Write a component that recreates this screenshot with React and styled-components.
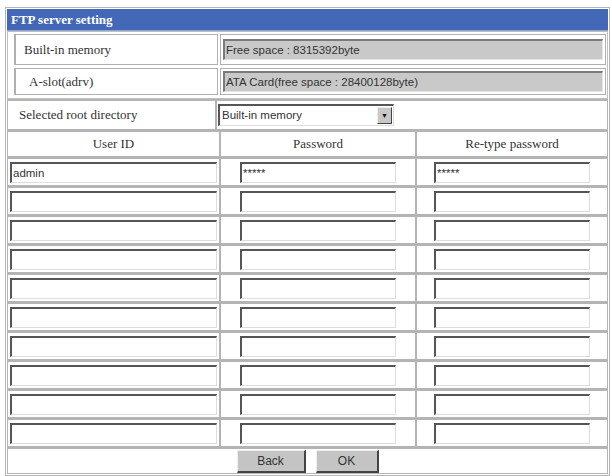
import React from "react";
import styled, { createGlobalStyle } from "styled-components";

const Global = createGlobalStyle`
  html, body { margin: 0; padding: 0; background: #fff; }
  body { font-family: "Liberation Serif", "Times New Roman", serif; color: #222; }
`;

const serif = `"Liberation Serif", "Times New Roman", serif`;
const sans = `"Liberation Sans", Arial, sans-serif`;

const Frame = styled.div`
  margin: 7px 0 0 5px;
  width: 601px;
  border: 1px solid #b4b4b4;
  padding: 1px;
  background: #fff;
`;

const Header = styled.div`
  height: 21px;
  line-height: 21px;
  background: #4368b8;
  color: #fff;
  font-family: ${serif};
  font-weight: bold;
  font-size: 13px;
  padding-left: 4px;
  border-bottom: 1px solid #8ea6d6;
`;

const InfoBlock = styled.div`
  border: 1px solid #c0c0c0;
  padding: 2px 1px 3px 6px;
  display: flex;
  flex-direction: column;
  gap: 3px;
`;

const InfoRow = styled.div`
  display: grid;
  grid-template-columns: 204px 1fr;
  gap: 2px;
  height: ${(p) => p.$h}px;
`;

const LabelCell = styled.div`
  border: 1px solid #b0b0b0;
  border-left-width: 2px;
  display: flex;
  align-items: center;
  padding-left: ${(p) => p.$pad || 0}px;
  font-family: ${serif};
  font-size: 13px;
  color: #333;
`;

const ValueCell = styled.div`
  border: 1px solid #b0b0b0;
  display: flex;
  align-items: center;
  padding: 0 2px;
`;

const GrayBox = styled.div`
  flex: 1;
  height: 21px;
  box-sizing: border-box;
  background: #c9c9c9;
  border-top: 2px solid #7a7a7a;
  border-left: 2px solid #7a7a7a;
  border-right: 1px solid #e6e6e6;
  border-bottom: 1px solid #e6e6e6;
  font-family: ${sans};
  font-size: 11.5px;
  color: #333;
  line-height: 18px;
  padding-left: 1px;
  white-space: nowrap;
`;

const GridRow = styled.div`
  display: grid;
  grid-template-columns: ${(p) => p.$cols};
  height: ${(p) => p.$h}px;
`;

const SelectBox = styled.div`
  width: 176px;
  height: 22px;
  box-sizing: border-box;
  display: flex;
  border-top: 2px solid #555;
  border-left: 2px solid #555;
  border-right: 1px solid #ddd;
  border-bottom: 1px solid #ddd;
  background: #fff;
`;

const SelectText = styled.span`
  flex: 1;
  font-family: ${sans};
  font-size: 11.5px;
  color: #333;
  line-height: 19px;
  padding-left: 2px;
`;

const SelectArrow = styled.span`
  width: 15px;
  margin: 1px;
  box-sizing: border-box;
  background: #c8c8c8;
  border-right: 1px solid #444;
  border-bottom: 1px solid #444;
  border-top: 1px solid #eee;
  border-left: 1px solid #eee;
  display: flex;
  align-items: center;
  justify-content: center;
  font-family: ${sans};
  font-size: 7px;
  color: #111;
`;

const Cell = styled.div`
  border: 1px solid #b4b4b4;
  border-top-width: 2px;
  display: flex;
  align-items: center;
  justify-content: ${(p) => (p.$left ? "flex-start" : "center")};
  padding: 0 ${(p) => p.$padx || 0}px;
  font-family: ${serif};
  font-size: 13px;
  color: #333;
`;

const TextInput = styled.input`
  width: ${(p) => (p.$full ? "100%" : "156px")};
  height: 21px;
  box-sizing: border-box;
  margin: 0;
  padding: 0 1px;
  border-top: 2px solid #555;
  border-left: 2px solid #555;
  border-right: 1px solid #ddd;
  border-bottom: 1px solid #ddd;
  background: #fff;
  font-family: ${sans};
  font-size: 11.5px;
  color: #333;
  outline: none;
`;

const ButtonRow = styled.div`
  border: 1px solid #b4b4b4;
  border-top-width: 2px;
  height: 27px;
  box-sizing: border-box;
  display: flex;
  justify-content: center;
  align-items: flex-start;
  padding-top: 1px;
  gap: 10px;
`;

const Button = styled.button`
  width: ${(p) => p.$w}px;
  height: 23px;
  background: #c4c4c4;
  border-top: 1px solid #eee;
  border-left: 1px solid #eee;
  border-right: 2px solid #444;
  border-bottom: 2px solid #444;
  font-family: ${sans};
  font-size: 12px;
  color: #333;
  padding: 0;
`;

const cols = "213px 196px 1fr";

export default function App() {
  const rows = Array.from({ length: 10 }, (_, i) => i);
  return (
    <>
      <Global />
      <Frame>
        <Header>FTP server setting</Header>
        <InfoBlock>
          <InfoRow $h={31}>
            <LabelCell $pad={8}>Built-in memory</LabelCell>
            <ValueCell>
              <GrayBox>Free space : 8315392byte</GrayBox>
            </ValueCell>
          </InfoRow>
          <InfoRow $h={27}>
            <LabelCell $pad={13}>A-slot(adrv)</LabelCell>
            <ValueCell>
              <GrayBox>ATA Card(free space : 28400128byte)</GrayBox>
            </ValueCell>
          </InfoRow>
        </InfoBlock>
        <GridRow $cols="209px 1fr" $h={31}>
          <Cell $left $padx={11}>Selected root directory</Cell>
          <Cell $left $padx={1}>
            <SelectBox>
              <SelectText>Built-in memory</SelectText>
              <SelectArrow>▼</SelectArrow>
            </SelectBox>
          </Cell>
        </GridRow>
        <GridRow $cols={cols} $h={27}>
          <Cell>User ID</Cell>
          <Cell>Password</Cell>
          <Cell>Re-type password</Cell>
        </GridRow>
        {rows.map((i) => (
          <GridRow key={i} $cols={cols} $h={29}>
            <Cell $padx={2}>
              <TextInput $full defaultValue={i === 0 ? "admin" : ""} />
            </Cell>
            <Cell>
              <TextInput defaultValue={i === 0 ? "*****" : ""} />
            </Cell>
            <Cell>
              <TextInput defaultValue={i === 0 ? "*****" : ""} />
            </Cell>
          </GridRow>
        ))}
        <ButtonRow>
          <Button $w={69}>Back</Button>
          <Button $w={63}>OK</Button>
        </ButtonRow>
      </Frame>
    </>
  );
}
